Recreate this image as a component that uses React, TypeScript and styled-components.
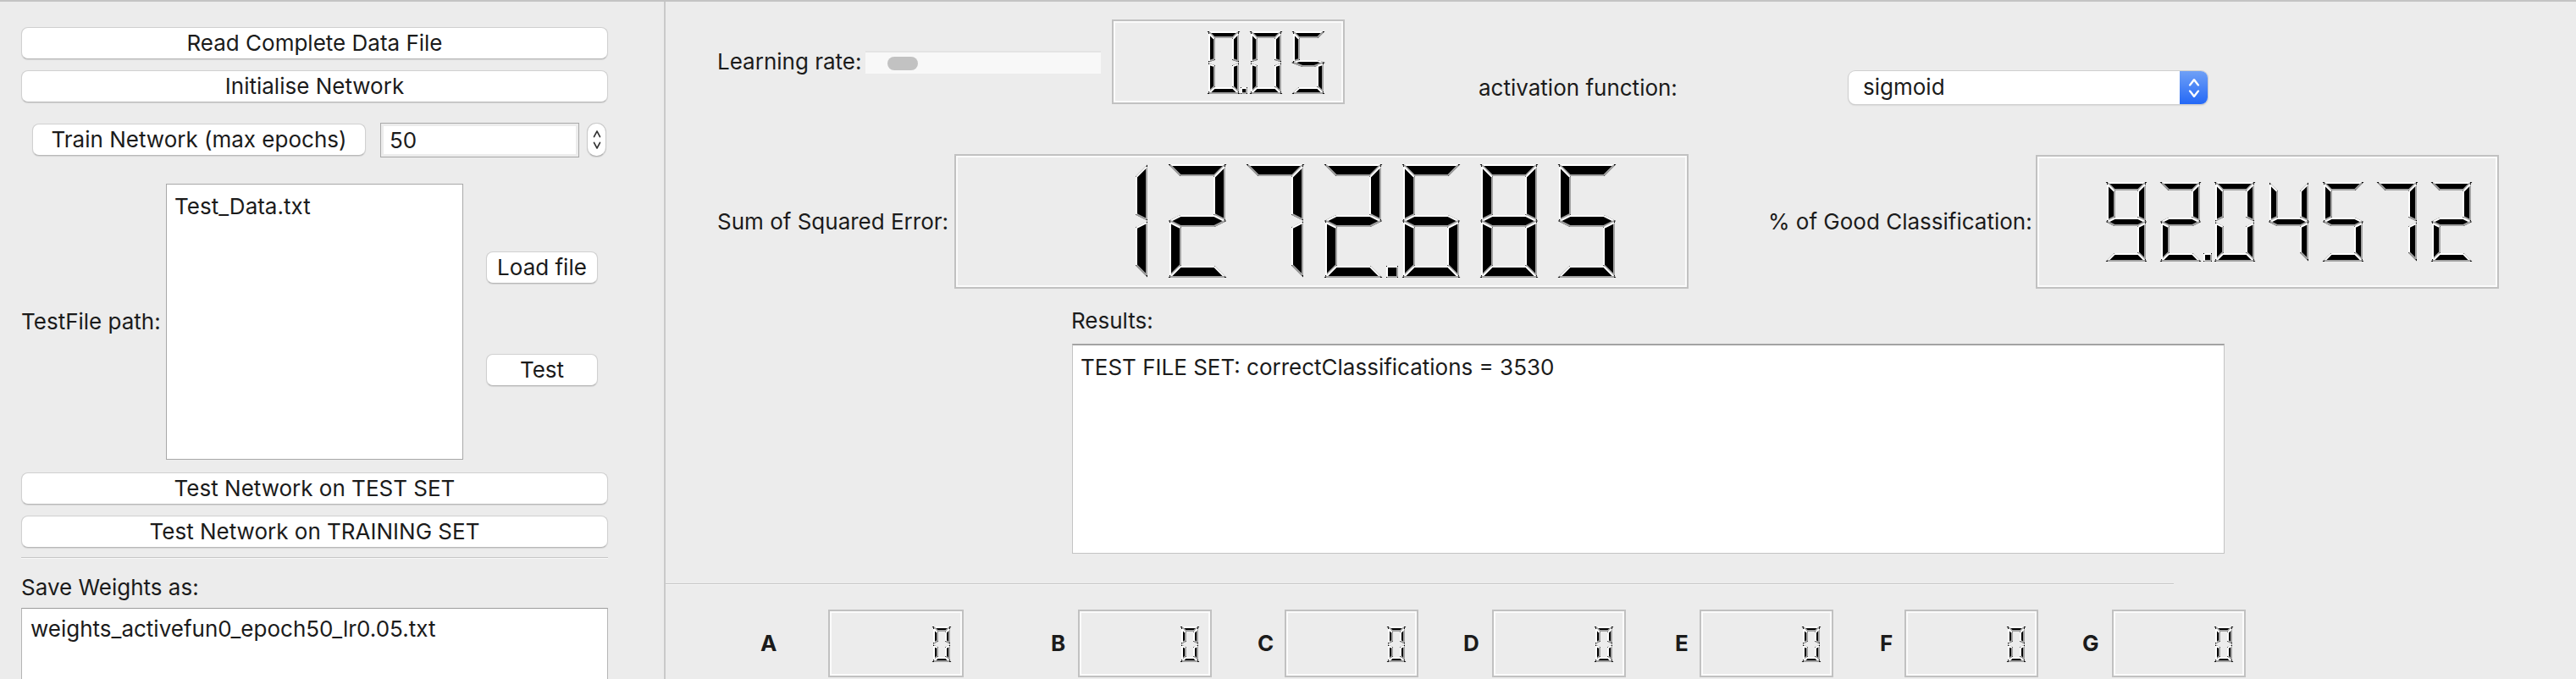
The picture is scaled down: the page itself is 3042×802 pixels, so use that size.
import React from 'react';
import styled, { createGlobalStyle } from 'styled-components';

const Global = createGlobalStyle`
  html, body { margin: 0; padding: 0; background: #ececec; }
  body { font-family: Inter, "Liberation Sans", sans-serif; color: #1b1b1b; }
  * { box-sizing: border-box; }
`;

const Window = styled.div`
  display: flex;
  width: 3042px;
  height: 802px;
  overflow: hidden;
  border-top: 2px solid #c4c4c4;
  background: #ececec;
  font-size: 26px;
  line-height: 30px;
`;

/* ---------- left panel ---------- */
const LeftPanel = styled.div`
  width: 786px;
  flex: none;
  border-right: 2px solid #c9c9c9;
  padding: 30px 0 0 25px;
  display: flex;
  flex-direction: column;
  & > * { flex-shrink: 0; }
`;

const PushButton = styled.button<{ $w?: number; $mt?: number; $ml?: number }>`
  display: block;
  width: ${(p) => (p.$w ? `${p.$w}px` : '693px')};
  height: 38px;
  margin: ${(p) => p.$mt ?? 0}px 0 0 ${(p) => p.$ml ?? 0}px;
  padding: 0;
  flex: none;
  background: #ffffff;
  border: 1px solid #d0d0d0;
  border-bottom-color: #b8b8b8;
  border-radius: 8px;
  box-shadow: 0 1px 1px rgba(0, 0, 0, 0.1);
  font: inherit;
  color: #1b1b1b;
  text-align: center;
`;

const TrainRow = styled.div`
  display: flex;
  align-items: center;
  margin-top: 23px;
  height: 42px;
`;

const SpinInput = styled.div`
  width: 235px;
  height: 41px;
  margin-left: 17px;
  background: #fff;
  border: 1px solid #a9a9a9;
  box-shadow: inset 0 0 0 3px #ececec;
  padding: 0 0 0 10px;
  line-height: 39px;
`;

const Stepper = styled.div`
  width: 23px;
  height: 40px;
  margin-left: 9px;
  background: #fff;
  border: 1px solid #c9c9c9;
  border-bottom-color: #b3b3b3;
  border-radius: 11px;
  box-shadow: 0 1px 1px rgba(0, 0, 0, 0.1);
  display: flex;
  align-items: center;
  justify-content: center;
`;

const FileSection = styled.div`
  display: grid;
  grid-template-columns: 171px 351px 27px 132px;
  height: 326px;
  margin-top: 31px;
`;

const FieldLabel = styled.div`
  align-self: center;
  white-space: nowrap;
`;

const ListBox = styled.div`
  background: #fff;
  border: 1px solid #a8a8a8;
  padding: 10px 0 0 9px;
  line-height: 32px;
`;

const SideButtons = styled.div`
  grid-column: 4;
  display: flex;
  flex-direction: column;
  gap: 83px;
  padding-top: 80px;
`;

const Separator = styled.div<{ $w: number; $mt: number }>`
  width: ${(p) => p.$w}px;
  height: 2px;
  flex: none;
  margin-top: ${(p) => p.$mt}px;
  border-top: 1px solid #c6c6c6;
  border-bottom: 1px solid #f7f7f7;
`;

const SaveLabel = styled.div`
  margin-top: 19px;
`;

const WeightsField = styled.div`
  width: 693px;
  height: 140px;
  flex: none;
  margin-top: 9px;
  background: #fff;
  border: 1px solid #b5b5b5;
  border-top-color: #9d9d9d;
  padding: 9px 10px;
`;

/* ---------- right panel ---------- */
const RightPanel = styled.div`
  flex: 1;
  display: flex;
  flex-direction: column;
  & > * { flex-shrink: 0; }
`;

const TopArea = styled.div`
  padding-left: 61px;
  display: flex;
  flex-direction: column;
  & > * { flex-shrink: 0; }
`;

const RowOne = styled.div`
  display: flex;
  height: 100px;
  margin-top: 21px;
`;

const RowLabel = styled.div<{ $w: number; $ml?: number; $end?: boolean }>`
  width: ${(p) => p.$w}px;
  margin-left: ${(p) => p.$ml ?? 0}px;
  flex: none;
  white-space: nowrap;
  align-self: ${(p) => (p.$end ? 'flex-end' : 'center')};
  line-height: ${(p) => (p.$end ? '39px' : '30px')};
`;

const SliderTrack = styled.div`
  width: 278px;
  height: 27px;
  align-self: center;
  background: #f8f8f8;
  border-top: 2px solid #e4e4e4;
  padding: 5px 0 0 26px;
`;

const SliderHandle = styled.div`
  width: 36px;
  height: 16px;
  border-radius: 8px;
  background: #c2c2c2;
`;

const ComboBox = styled.div`
  width: 424px;
  height: 39px;
  align-self: flex-end;
  display: flex;
  background: #fff;
  border-radius: 8px;
  box-shadow: 0 0 0 1px #cfcfcf, 0 1px 2px rgba(0, 0, 0, 0.25);
  overflow: hidden;
`;

const ComboText = styled.div`
  flex: 1;
  padding-left: 17px;
  line-height: 37px;
`;

const ComboArrow = styled.div`
  width: 33px;
  background: linear-gradient(#6fa0f6, #2468f6);
  display: flex;
  align-items: center;
  justify-content: center;
`;

const RowTwo = styled.div`
  display: flex;
  align-items: center;
  margin-top: 59px;
  height: 159px;
`;

const ResultsLabel = styled.div`
  margin: 23px 0 0 418px;
`;

const ResultsBox = styled.div`
  width: 1361px;
  height: 248px;
  margin: 12px 0 0 419px;
  background: #fff;
  border: 1px solid #c3c3c3;
  border-top: 2px solid #a3a3a3;
  padding: 10px 9px;
  line-height: 32px;
`;

const ChannelRow = styled.div`
  display: flex;
  align-items: center;
  height: 80px;
  margin-top: 29px;
`;

const ChannelLabel = styled.div<{ $ml: number }>`
  width: 20px;
  flex: none;
  margin-left: ${(p) => p.$ml}px;
  font-weight: 700;
`;

const ChannelSlot = styled.div<{ $ml: number }>`
  margin-left: ${(p) => p.$ml}px;
  flex: none;
`;

/* ---------- LCD number ---------- */
const LcdFrame = styled.div<{ $w: number; $h: number }>`
  width: ${(p) => p.$w}px;
  height: ${(p) => p.$h}px;
  flex: none;
  border: 2px solid #c1c1c1;
  box-shadow: inset 0 0 0 2px #fbfbfb;
  svg { display: block; }
`;

type Pt = [number, number];
type Step = [boolean, number, number]; // light?, x, y

const SEGS: Record<string, number[]> = {
  '0': [0, 1, 2, 4, 5, 6],
  '1': [2, 5],
  '2': [0, 2, 3, 4, 6],
  '3': [0, 2, 3, 5, 6],
  '4': [1, 2, 3, 5],
  '5': [0, 1, 3, 5, 6],
  '6': [0, 1, 3, 4, 5, 6],
  '7': [0, 2, 5],
  '8': [0, 1, 2, 3, 4, 5, 6],
  '9': [0, 1, 2, 3, 5, 6],
};

function segment(seg: number, L: number): { base: Pt; steps: Step[] } {
  const w = Math.floor(L / 5);
  const h = Math.floor(w / 2);
  const T = true;
  const F = false;
  switch (seg) {
    case 0:
      return { base: [0, 0], steps: [[T, L - 1, 0], [F, L - w - 1, w], [F, w, w], [F, 0, 0]] };
    case 1:
      return { base: [0, 1], steps: [[T, w, w], [F, w, L - h - 2], [F, 0, L - 2], [T, 0, 0]] };
    case 2:
      return { base: [L - 1, 1], steps: [[F, 0, L - 2], [F, -w, L - h - 2], [T, -w, w], [T, 0, 0]] };
    case 3: {
      const lower: Step[] = w % 2 === 1
        ? [[F, L - w - 3, h + 1], [F, w + 2, h + 1]]
        : [[F, L - w - 1, h], [F, w, h]];
      return { base: [0, L], steps: [[T, w, -h], [T, L - w - 1, -h], [T, L - 1, 0], ...lower, [F, 0, 0]] };
    }
    case 4:
      return { base: [0, L + 1], steps: [[T, w, h], [F, w, L - w - 2], [F, 0, L - 2], [T, 0, 0]] };
    case 5:
      return { base: [L - 1, L + 1], steps: [[F, 0, L - 2], [F, -w, L - w - 2], [T, -w, h], [T, 0, 0]] };
    case 6:
      return { base: [0, 2 * L], steps: [[T, w, -w], [T, L - w - 1, -w], [T, L - 1, 0], [F, 0, 0]] };
    default:
      return { base: [L + h, 2 * L], steps: [[F, w, 0], [F, w, -w], [T, 0, -w], [T, 0, 0]] };
  }
}

interface LcdProps {
  w: number;
  h: number;
  seg: number;
  n: number;
  value: string;
}

const Lcd: React.FC<LcdProps> = ({ w, h, seg, n, value }) => {
  const Wl = w / 2;
  const Hl = h / 2;
  const cells: { ch: string; point: boolean }[] = [];
  for (const c of value) {
    if (c === '.') {
      if (cells.length) cells[cells.length - 1].point = true;
    } else cells.push({ ch: c, point: false });
  }
  const xAdv = Math.floor((seg * 7) / 5);
  const xOff = Math.floor((Wl - n * xAdv + Math.floor(seg / 5)) / 2);
  const yOff = Math.floor((Hl - seg * 2) / 2);
  const start = n - cells.length;

  const polys: React.ReactNode[] = [];
  const lines: React.ReactNode[] = [];
  cells.forEach((cell, i) => {
    const px = xOff + xAdv * (start + i);
    const py = yOff;
    const segList = [...(SEGS[cell.ch] || [])];
    if (cell.point) segList.push(7);
    segList.forEach((s) => {
      const { base, steps } = segment(s, seg);
      const bx = px + base[0];
      const by = py + base[1];
      const pts: Pt[] = [[bx, by], ...steps.map((st) => [bx + st[1], by + st[2]] as Pt)];
      polys.push(
        <polygon
          key={`p${i}-${s}`}
          points={pts.map((p) => p.join(',')).join(' ')}
          fill="#000"
          stroke="#000"
          strokeWidth={1}
        />,
      );
      let prev: Pt = [bx, by];
      steps.forEach((st, k) => {
        const next: Pt = [bx + st[1], by + st[2]];
        lines.push(
          <line
            key={`l${i}-${s}-${k}`}
            x1={prev[0]}
            y1={prev[1]}
            x2={next[0]}
            y2={next[1]}
            stroke={st[0] ? '#ffffff' : '#a2a2a2'}
            strokeWidth={1}
          />,
        );
        prev = next;
      });
    });
  });

  return (
    <LcdFrame $w={w} $h={h}>
      <svg width={w - 4} height={h - 4} viewBox={`1 1 ${Wl - 2} ${Hl - 2}`}>
        <g transform="translate(0.5 0.5)">
          {polys}
          {lines}
        </g>
      </svg>
    </LcdFrame>
  );
};

const Chevrons: React.FC<{ color: string; w: number; h: number; sw: number }> = ({ color, w, h, sw }) => (
  <svg width={w} height={h} viewBox="0 0 10 24" fill="none" stroke={color} strokeWidth={sw} strokeLinecap="round" strokeLinejoin="round" preserveAspectRatio="none">
    <path d="M1.5 9 L5 3.5 L8.5 9" />
    <path d="M1.5 15 L5 20.5 L8.5 15" />
  </svg>
);

const channels = [
  { l: 'A', lead: 112, gap: 60, w: 160 },
  { l: 'B', lead: 103, gap: 12, w: 158 },
  { l: 'C', lead: 54, gap: 12, w: 158 },
  { l: 'D', lead: 53, gap: 14, w: 158 },
  { l: 'E', lead: 58, gap: 9, w: 158 },
  { l: 'F', lead: 55, gap: 9, w: 158 },
  { l: 'G', lead: 52, gap: 15, w: 158 },
];

export default function App() {
  return (
    <>
      <Global />
      <Window>
        <LeftPanel>
          <PushButton>Read Complete Data File</PushButton>
          <PushButton $mt={13}>Initialise Network</PushButton>
          <TrainRow>
            <PushButton $w={394} $ml={13}>Train Network (max epochs)</PushButton>
            <SpinInput>50</SpinInput>
            <Stepper>
              <Chevrons color="#333333" w={10} h={28} sw={1.6} />
            </Stepper>
          </TrainRow>
          <FileSection>
            <FieldLabel>TestFile path:</FieldLabel>
            <ListBox>Test_Data.txt</ListBox>
            <SideButtons>
              <PushButton $w={132}>Load file</PushButton>
              <PushButton $w={132}>Test</PushButton>
            </SideButtons>
          </FileSection>
          <PushButton $mt={15}>Test Network on TEST SET</PushButton>
          <PushButton $mt={13}>Test Network on TRAINING SET</PushButton>
          <Separator $w={693} $mt={11} />
          <SaveLabel>Save Weights as:</SaveLabel>
          <WeightsField>weights_activefun0_epoch50_lr0.05.txt</WeightsField>
        </LeftPanel>

        <RightPanel>
          <TopArea>
            <RowOne>
              <RowLabel $w={175}>Learning rate:</RowLabel>
              <SliderTrack>
                <SliderHandle />
              </SliderTrack>
              <ChannelSlot $ml={13}>
                <Lcd w={275} h={100} seg={18} n={5} value="0.05" />
              </ChannelSlot>
              <RowLabel $w={437} $ml={158} $end>activation function:</RowLabel>
              <ComboBox>
                <ComboText>sigmoid</ComboText>
                <ComboArrow>
                  <Chevrons color="#ffffff" w={14} h={28} sw={1.8} />
                </ComboArrow>
              </ComboBox>
            </RowOne>
            <RowTwo>
              <RowLabel $w={280}>Sum of Squared Error:</RowLabel>
              <Lcd w={867} h={159} seg={33} n={8} value="1272.685" />
              <RowLabel $w={316} $ml={94}>% of Good Classification:</RowLabel>
              <Lcd w={547} h={158} seg={23} n={8} value="92.04572" />
            </RowTwo>
            <ResultsLabel>Results:</ResultsLabel>
            <ResultsBox>TEST FILE SET: correctClassifications = 3530</ResultsBox>
          </TopArea>
          <Separator $w={1781} $mt={35} />
          <ChannelRow>
            {channels.map((c) => (
              <React.Fragment key={c.l}>
                <ChannelLabel $ml={c.lead}>{c.l}</ChannelLabel>
                <ChannelSlot $ml={c.gap}>
                  <Lcd w={c.w} h={80} seg={10} n={5} value="0" />
                </ChannelSlot>
              </React.Fragment>
            ))}
          </ChannelRow>
        </RightPanel>
      </Window>
    </>
  );
}
